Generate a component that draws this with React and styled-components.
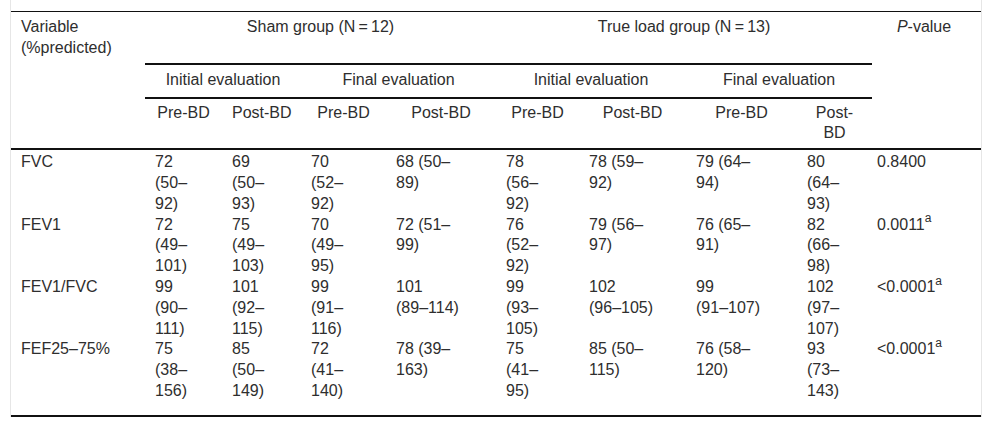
import React from "react";
import styled, { createGlobalStyle } from "styled-components";

const GlobalStyle = createGlobalStyle`
  html, body {
    margin: 0;
    padding: 0;
    background: #ffffff;
  }
  body {
    font-family: "Liberation Sans", Arial, Helvetica, sans-serif;
    color: #2e2e2e;
  }
`;

const Frame = styled.div`
  margin-left: 10px;
  width: 970px;
  padding-top: 11px;
  border-left: 1px solid #e6e6e6;
  border-right: 1px solid #e6e6e6;
`;

const Table = styled.table`
  width: 970px;
  table-layout: fixed;
  border-collapse: separate;
  border-spacing: 0;
  border-top: 1px solid #111;
  font-size: 16px;
  line-height: 20.8px;
  color: #2e2e2e;

  tbody tr:first-child td {
    padding-top: 2px;
  }
  tbody tr:last-child td {
    padding-bottom: 13px;
    border-bottom: 2px solid #111;
  }
`;

const Head = styled.th`
  font-weight: normal;
  vertical-align: top;
  text-align: ${(p) => (p.$left ? "left" : "center")};
  padding: ${(p) => p.$pad || "5px 10px 5px"};
  border-bottom: ${(p) => (p.$rule ? "2px solid #111" : "none")};
`;

const Cell = styled.td`
  vertical-align: top;
  text-align: left;
  padding: 0 10px 0 ${(p) => (p.$tight ? "5px" : "10px")};
`;

const Line = styled.span`
  display: block;
  white-space: nowrap;
`;

const Sup = styled.sup`
  font-size: 12px;
  line-height: 0;
  position: relative;
  top: -1px;
`;

const widths = [134, 77, 79, 85, 110, 83, 107, 111, 75, 109];

const subHeads = [
  ["Pre-BD"],
  ["Post-BD"],
  ["Pre-BD"],
  ["Post-BD"],
  ["Pre-BD"],
  ["Post-BD"],
  ["Pre-BD"],
  ["Post-", "BD"],
];

const rows = [
  {
    name: "FVC",
    values: [
      ["72", "(50–", "92)"],
      ["69", "(50–", "93)"],
      ["70", "(52–", "92)"],
      ["68 (50–", "89)"],
      ["78", "(56–", "92)"],
      ["78 (59–", "92)"],
      ["79 (64–", "94)"],
      ["80", "(64–", "93)"],
    ],
    p: "0.8400",
    sup: false,
  },
  {
    name: "FEV1",
    values: [
      ["72", "(49–", "101)"],
      ["75", "(49–", "103)"],
      ["70", "(49–", "95)"],
      ["72 (51–", "99)"],
      ["76", "(52–", "92)"],
      ["79 (56–", "97)"],
      ["76 (65–", "91)"],
      ["82", "(66–", "98)"],
    ],
    p: "0.0011",
    sup: true,
  },
  {
    name: "FEV1/FVC",
    values: [
      ["99", "(90–", "111)"],
      ["101", "(92–", "115)"],
      ["99", "(91–", "116)"],
      ["101", "(89–114)"],
      ["99", "(93–", "105)"],
      ["102", "(96–105)"],
      ["99", "(91–107)"],
      ["102", "(97–", "107)"],
    ],
    p: "<0.0001",
    sup: true,
  },
  {
    name: "FEF25–75%",
    values: [
      ["75", "(38–", "156)"],
      ["85", "(50–", "149)"],
      ["72", "(41–", "140)"],
      ["78 (39–", "163)"],
      ["75", "(41–", "95)"],
      ["85 (50–", "115)"],
      ["76 (58–", "120)"],
      ["93", "(73–", "143)"],
    ],
    p: "<0.0001",
    sup: true,
  },
];

function Lines({ items }) {
  return items.map((t, i) => <Line key={i}>{t}</Line>);
}

export default function App() {
  return (
    <>
      <GlobalStyle />
      <Frame>
        <Table>
          <colgroup>
            {widths.map((w, i) => (
              <col key={i} style={{ width: w }} />
            ))}
          </colgroup>
          <thead>
            <tr>
              <Head rowSpan={3} $left $rule>
                <Line>Variable</Line>
                <Line>(%predicted)</Line>
              </Head>
              <Head colSpan={4} $rule $pad="5px 10px 25px">
                Sham group (N{"\u2009"}={"\u2009"}12)
              </Head>
              <Head colSpan={4} $rule $pad="5px 10px 25px">
                True load group (N{"\u2009"}={"\u2009"}13)
              </Head>
              <Head rowSpan={3} $rule $pad="5px 10px 5px 5px">
                <i>P</i>-value
              </Head>
            </tr>
            <tr>
              <Head colSpan={2} $rule $pad="5px 10px 6px">
                Initial evaluation
              </Head>
              <Head colSpan={2} $rule $pad="5px 10px 6px">
                Final evaluation
              </Head>
              <Head colSpan={2} $rule $pad="5px 10px 6px">
                Initial evaluation
              </Head>
              <Head colSpan={2} $rule $pad="5px 10px 6px">
                Final evaluation
              </Head>
            </tr>
            <tr>
              {subHeads.map((h, i) => (
                <Head key={i} $rule $pad="4px 10px 4px">
                  <Lines items={h} />
                </Head>
              ))}
            </tr>
          </thead>
          <tbody>
            {rows.map((row) => (
              <tr key={row.name}>
                <Cell>{row.name}</Cell>
                {row.values.map((v, i) => (
                  <Cell key={i}>
                    <Lines items={v} />
                  </Cell>
                ))}
                <Cell $tight>
                  {row.p}
                  {row.sup && <Sup>a</Sup>}
                </Cell>
              </tr>
            ))}
          </tbody>
        </Table>
      </Frame>
    </>
  );
}
